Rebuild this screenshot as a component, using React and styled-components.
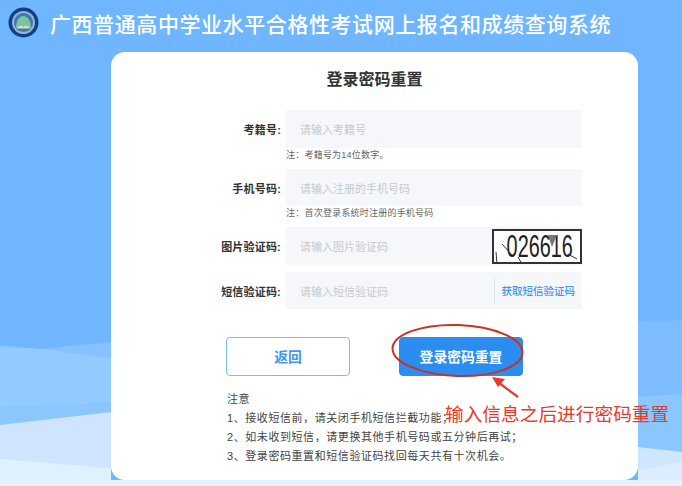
import React from "react";
import styled, { createGlobalStyle } from "styled-components";

const Global = createGlobalStyle`
  html, body {
    margin: 0;
    padding: 0;
    background: #e6f1fd;
  }
  * {
    box-sizing: border-box;
  }
`;

const Page = styled.div`
  position: relative;
  width: 682px;
  height: 486px;
  overflow: hidden;
  display: flex;
  flex-direction: column;
  font-family: "Liberation Sans", "Noto Sans CJK SC", sans-serif;
  background: #6fb5ff;
`;

const Backdrop = styled.svg`
  position: absolute;
  inset: 0;
  width: 682px;
  height: 486px;
`;

const Header = styled.header`
  position: relative;
  height: 45px;
  display: flex;
  align-items: center;
  gap: 11px;
  padding-left: 8px;
`;

const Title = styled.h1`
  margin: 0;
  font-size: 21px;
  font-weight: 500;
  letter-spacing: 0.58px;
  color: #fff;
  white-space: nowrap;
`;

const Card = styled.main`
  position: relative;
  width: 527px;
  height: 428px;
  margin: 7px 0 0 111px;
  padding-top: 17px;
  background: #fff;
  border-radius: 14px;
`;

const Heading = styled.h2`
  margin: 0 0 19px;
  height: 22px;
  line-height: 22px;
  text-align: center;
  font-size: 16px;
  font-weight: 700;
  color: #333;
`;

const Row = styled.div`
  display: flex;
  align-items: center;
  gap: 5px;
  margin-top: ${(p) => p.$top || 0}px;
`;

const Label = styled.label`
  width: 170px;
  text-align: right;
  font-size: 11px;
  font-weight: 700;
  letter-spacing: 0.2px;
  color: #333;
`;

const Field = styled.div`
  width: 296px;
  height: ${(p) => p.$height || 38}px;
  display: flex;
  align-items: center;
  justify-content: space-between;
  padding-left: 14px;
  background: #f5f7fb;
  font-size: 11px;
  color: #c6c9cf;
`;

const Note = styled.p`
  margin: 1px 0 0 175px;
  height: 13px;
  line-height: 13px;
  font-size: 9px;
  letter-spacing: 0.22px;
  color: #666;
`;

const Captcha = styled.div`
  position: relative;
  width: 90px;
  height: 35px;
  padding-left: 6px;
  border: 2px solid #333;
  background: #fff;
  display: flex;
  align-items: center;
  justify-content: center;
  overflow: hidden;
`;

const CaptchaDigits = styled.span`
  display: block;
  font-family: "Liberation Sans", sans-serif;
  font-size: 31px;
  line-height: 31px;
  color: #222;
  transform: scaleX(0.64);
`;

const CaptchaNoise = styled.svg`
  position: absolute;
  inset: 0;
`;

const SmsLink = styled.span`
  height: 26px;
  line-height: 26px;
  margin-right: 7px;
  padding-left: 7px;
  border-left: 1px solid #dfe6ef;
  font-size: 10.5px;
  font-weight: 500;
  color: #3f97f2;
`;

const Actions = styled.div`
  display: flex;
  gap: 49px;
  margin: 28px 0 0 115px;
`;

const Button = styled.button`
  width: 124px;
  height: 39px;
  padding: 0 0 2px;
  border-radius: 4px;
  border: 1px solid ${(p) => (p.$primary ? "#2b8df0" : "#7cbcf5")};
  background: ${(p) => (p.$primary ? "#2b8df0" : "#fff")};
  color: ${(p) => (p.$primary ? "#fff" : "#3f97f2")};
  font-family: inherit;
  font-size: 13.8px;
  font-weight: 700;
`;

const Notice = styled.div`
  margin: 14px 0 0 116px;
  font-size: 11px;
  letter-spacing: 0.57px;
  line-height: 19px;
  color: #444;
  white-space: nowrap;
`;

const Markup = styled.svg`
  position: absolute;
  inset: 0;
  width: 682px;
  height: 486px;
  pointer-events: none;
`;

const Annotation = styled.span`
  position: absolute;
  left: 445px;
  top: 403px;
  font-size: 18.7px;
  line-height: 24px;
  color: #e8392b;
  white-space: nowrap;
`;

function Logo() {
  return (
    <svg width="31" height="31" viewBox="0 0 31 31" aria-hidden="true">
      <circle cx="15.5" cy="15.5" r="15" fill="#123f80" />
      <circle cx="15.5" cy="15.5" r="11.5" fill="#8fb4d6" />
      <circle cx="15.5" cy="15.5" r="9.5" fill="#3f78ae" />
      <path d="M8 21c0-7 3-12 7.5-12S23 14 23 21z" fill="#7fc2a0" />
      <path d="M9 21.5c2-3.5 4.5-3.5 6.5-1.5 2-2 4.5-2 6.5 1.5z" fill="#d6e3ba" />
    </svg>
  );
}

function SmallCaptcha() {
  return (
    <Captcha>
      <CaptchaDigits>026616</CaptchaDigits>
      <CaptchaNoise width="86" height="31" viewBox="0 0 86 31" aria-hidden="true">
        <path d="M8 13l10 11M2 21l1 12M24 26l4 7M74 23l9 5" stroke="#333" strokeWidth="1" fill="none" />
        <path d="M54 4h9l-5 12z" fill="#777" />
      </CaptchaNoise>
    </Captcha>
  );
}

export default function App() {
  return (
    <Page>
      <Global />
      <Backdrop viewBox="0 0 682 486" aria-hidden="true">
        <rect width="682" height="486" fill="#70b6ff" />
        <polygon points="0,345 40,349 111,342 111,420 0,420" fill="#85c2ff" />
        <polygon points="0,347 40,349 111,358 111,420 0,420" fill="#93caff" />
        <polygon points="0,407 111,402 111,430 0,430" fill="#8cc6ff" />
        <polygon points="638,322 682,320 682,460 638,460" fill="#7dbdff" />
        <polygon points="638,397 682,394 682,460 638,460" fill="#8cc6ff" />
        <polygon points="0,425 111,412 111,486 0,486" fill="#cfe5ff" />
        <polygon points="0,459 111,468 111,486 0,486" fill="#dff0ff" />
        <polygon points="638,447 682,452 682,486 638,486" fill="#cfe6ff" />
        <polygon points="638,470 682,462 682,486 638,486" fill="#dcedff" />
        <rect x="0" y="480" width="682" height="6" fill="#e6f1fd" />
      </Backdrop>
      <Header>
        <Logo />
        <Title>广西普通高中学业水平合格性考试网上报名和成绩查询系统</Title>
      </Header>
      <Card>
        <Heading>登录密码重置</Heading>
        <Row>
          <Label>考籍号:</Label>
          <Field>请输入考籍号</Field>
        </Row>
        <Note>注：考籍号为14位数字。</Note>
        <Row $top={7}>
          <Label>手机号码:</Label>
          <Field $height={37}>请输入注册的手机号码</Field>
        </Row>
        <Note>注：首次登录系统时注册的手机号码</Note>
        <Row $top={7}>
          <Label>图片验证码:</Label>
          <Field>
            请输入图片验证码
            <SmallCaptcha />
          </Field>
        </Row>
        <Row $top={7}>
          <Label>短信验证码:</Label>
          <Field $height={37}>
            请输入短信验证码
            <SmsLink>获取短信验证码</SmsLink>
          </Field>
        </Row>
        <Actions>
          <Button>返回</Button>
          <Button $primary>登录密码重置</Button>
        </Actions>
        <Notice>
          注意
          <br />
          1、接收短信前，请关闭手机短信拦截功能；
          <br />
          2、如未收到短信，请更换其他手机号码或五分钟后再试；
          <br />
          3、登录密码重置和短信验证码找回每天共有十次机会。
        </Notice>
      </Card>
      <Markup viewBox="0 0 682 486" aria-hidden="true">
        <ellipse cx="457.5" cy="350.5" rx="65" ry="25.5" fill="none" stroke="#c9321f" strokeWidth="2" transform="rotate(2 457.5 350.5)" />
        <path d="M518 397L498 382" stroke="#e8392b" strokeWidth="2.2" fill="none" />
        <path d="M492 377l13 2-7 8z" fill="#e8392b" />
      </Markup>
      <Annotation>输入信息之后进行密码重置</Annotation>
    </Page>
  );
}
